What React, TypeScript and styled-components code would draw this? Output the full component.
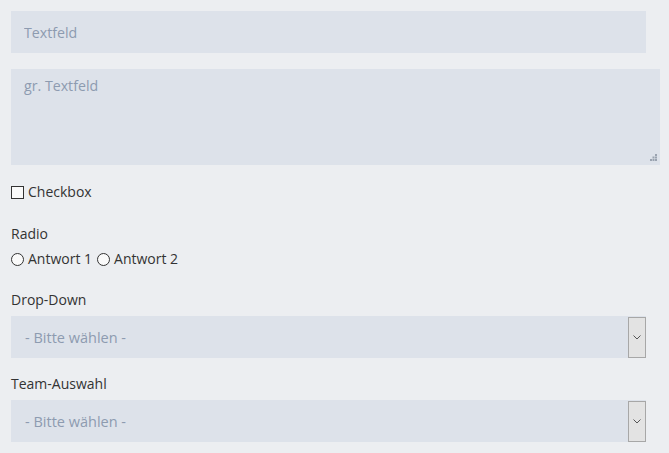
import React from 'react'
import styled, { createGlobalStyle } from 'styled-components'

const GlobalStyle = createGlobalStyle`
  html, body {
    margin: 0;
    padding: 0;
    background: #eceef1;
  }
  body {
    font-family: 'Open Sans', 'Liberation Sans', sans-serif;
    font-size: 14px;
    color: #333;
  }
`

const Form = styled.form`
  display: flex;
  flex-direction: column;
  padding: 11px;
  width: 669px;
  box-sizing: border-box;
`

const TextInput = styled.input`
  width: 635px;
  height: 42px;
  box-sizing: border-box;
  border: none;
  outline: none;
  background: #dde2ea;
  padding: 0 13px;
  font: inherit;
  font-size: 14.2px;
  color: #333;
  margin-bottom: 16px;

  &::placeholder {
    color: #8d9bb0;
  }
`

const AreaWrap = styled.div`
  position: relative;
  width: 649px;
  height: 96px;
`

const TextArea = styled.textarea`
  width: 100%;
  height: 100%;
  box-sizing: border-box;
  border: none;
  outline: none;
  resize: none;
  background: #dde2ea;
  padding: 7px 13px;
  font: inherit;
  font-size: 14.2px;
  line-height: 20px;
  color: #333;
  display: block;

  &::placeholder {
    color: #8d9bb0;
  }
`

const Grip = styled.svg`
  position: absolute;
  right: 3px;
  bottom: 4px;
`

const Row = styled.div<{ $top?: number }>`
  display: flex;
  align-items: center;
  height: 20px;
  margin-top: ${(p) => p.$top ?? 0}px;
`

const Label = styled.label<{ $top?: number }>`
  display: block;
  line-height: 20px;
  margin-top: ${(p) => p.$top ?? 0}px;
  color: #333;
`

const Option = styled.label`
  display: inline-flex;
  align-items: center;
  gap: 4px;
  margin-right: 5px;
  line-height: 20px;
`

const Box = styled.input<{ $round?: boolean }>`
  appearance: none;
  margin: 0;
  width: 13px;
  height: 13px;
  box-sizing: border-box;
  border: 1px solid #333;
  background: #fafafa;
  border-radius: ${(p) => (p.$round ? '50%' : '0')};
`

const Select = styled.div<{ $top?: number }>`
  display: flex;
  width: 635px;
  height: 42px;
  margin-top: ${(p) => p.$top ?? 0}px;
  background: #dde2ea;
`

const SelectValue = styled.span`
  flex: 1;
  display: flex;
  align-items: center;
  padding: 0 14px;
  font-size: 14.5px;
  color: #8d9bb0;
`

const SelectButton = styled.span`
  width: 18px;
  box-sizing: border-box;
  margin: 1px 0 0;
  height: 41px;
  border: 1px solid #a7a7a7;
  background: #e3e3e3;
  display: flex;
  align-items: center;
  justify-content: center;
`

const Chevron = () => (
  <svg width="8" height="5" viewBox="0 0 8 5">
    <path d="M0.5 0.5 L4 4 L7.5 0.5" fill="none" stroke="#555" strokeWidth="1" />
  </svg>
)

const Dropdown = ({ top }: { top: number }) => (
  <Select $top={top}>
    <SelectValue>- Bitte wählen -</SelectValue>
    <SelectButton>
      <Chevron />
    </SelectButton>
  </Select>
)

export default function App() {
  return (
    <>
      <GlobalStyle />
      <Form>
        <TextInput placeholder="Textfeld" />
        <AreaWrap>
          <TextArea placeholder="gr. Textfeld" />
          <Grip width="7" height="7" viewBox="0 0 7 7">
            <g fill="#9aa3b0">
              <rect x="5" y="0" width="2" height="2" />
              <rect x="2.5" y="2.5" width="2" height="2" />
              <rect x="5" y="2.5" width="2" height="2" />
              <rect x="0" y="5" width="2" height="2" />
              <rect x="2.5" y="5" width="2" height="2" />
              <rect x="5" y="5" width="2" height="2" />
            </g>
          </Grip>
        </AreaWrap>
        <Row $top={17}>
          <Option>
            <Box type="checkbox" />
            Checkbox
          </Option>
        </Row>
        <Label $top={22}>Radio</Label>
        <Row $top={5}>
          <Option>
            <Box type="radio" name="r" $round />
            Antwort 1
          </Option>
          <Option>
            <Box type="radio" name="r" $round />
            Antwort 2
          </Option>
        </Row>
        <Label $top={21}>Drop-Down</Label>
        <Dropdown top={6} />
        <Label $top={16}>Team-Auswahl</Label>
        <Dropdown top={6} />
      </Form>
    </>
  )
}
